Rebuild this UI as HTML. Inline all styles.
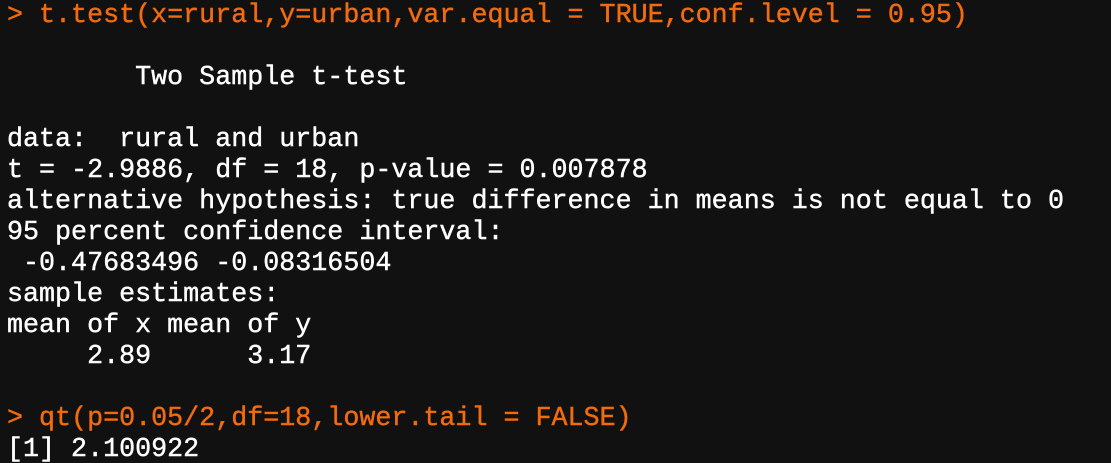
<!DOCTYPE html>
<html><head><style>
html,body{margin:0;padding:0;background:#111111;width:1111px;height:463px;overflow:hidden}
pre{margin:0;padding:0 0 0 7px;font-family:"Liberation Mono",monospace;font-size:26.7px;line-height:31px;color:#ffffff;white-space:pre;position:relative;top:1px;-webkit-text-stroke:0.4px currentColor}
.o{color:#f26b0f}
</style></head><body><pre><span class="o">&gt; t.test(x=rural,y=urban,var.equal = TRUE,conf.level = 0.95)</span>

        Two Sample t-test

data:  rural and urban
t = -2.9886, df = 18, p-value = 0.007878
alternative hypothesis: true difference in means is not equal to 0
95 percent confidence interval:
 -0.47683496 -0.08316504
sample estimates:
mean of x mean of y 
     2.89      3.17 

<span class="o">&gt; qt(p=0.05/2,df=18,lower.tail = FALSE)</span>
[1] 2.100922</pre></body></html>
